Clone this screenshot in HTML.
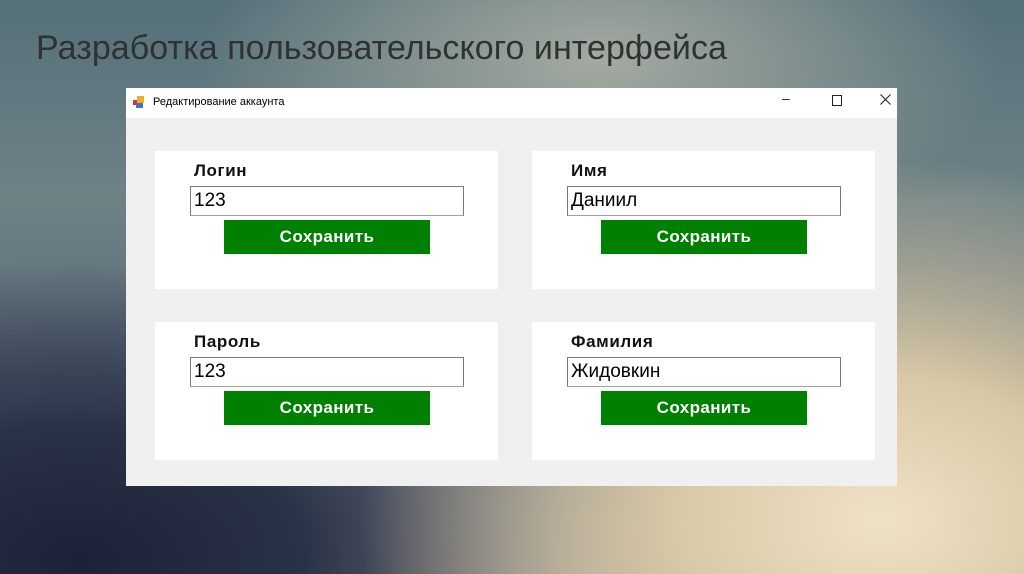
<!DOCTYPE html>
<html><head><meta charset="utf-8"><style>
*{margin:0;padding:0;box-sizing:border-box}
body{width:1024px;height:574px;overflow:hidden;position:relative;font-family:"Liberation Sans",sans-serif;
background:
radial-gradient(ellipse 520px 360px at 880px 520px,#f0e2c6 0%,#d9c8a6 40%,rgba(200,185,150,0) 100%),
radial-gradient(ellipse 500px 300px at 80px 560px,#1c2238 0%,#2a3248 45%,rgba(50,60,80,0) 100%),
radial-gradient(ellipse 400px 200px at 600px 60px,#a4aaa0 0%,rgba(150,160,155,0) 100%),
linear-gradient(180deg,#55707a 0%,#6e8286 35%,#5c6a78 65%,#8a8a8a 100%);}
h1{position:absolute;left:36px;top:29px;font-size:34px;font-weight:normal;color:#2e3232;letter-spacing:0.05px}
.win{position:absolute;left:126px;top:88px;width:771px;height:398px;background:#f0f0f0}
.tb{height:30px;background:#fff;position:relative;font-size:11px;color:#000}
.tb .ic{position:absolute;left:7px;top:8px;width:12px;height:12px}
.tb .t{position:absolute;left:27px;top:8px}
.ctl{position:absolute;top:4px;font-size:14px;color:#222}
.p{position:absolute;width:343px;height:138px;background:#fff}
.p .l{position:absolute;left:39px;top:10px;font-size:17px;font-weight:bold;color:#111;letter-spacing:0.6px}
.p .in{position:absolute;left:35px;top:35px;width:274px;height:30px;border:1px solid #7a7a7a;border-bottom-color:#a0a0a0;font-size:19px;padding:3px 0 0 3px;color:#000}
.p .b{position:absolute;left:69px;top:69px;width:206px;height:34px;background:#008000;color:#fff;font-size:17px;font-weight:bold;text-align:center;line-height:34px;letter-spacing:0.4px}
</style></head><body>
<h1>Разработка пользовательского интерфейса</h1>
<div class="win">
<div class="tb">
<svg class="ic" viewBox="0 0 12 12"><rect x="0" y="4" width="5" height="5" fill="#d33"/><rect x="4" y="0" width="7" height="7" fill="#f0b020"/><rect x="3" y="7" width="7" height="5" fill="#3a70d0"/></svg>
<span class="t">Редактирование аккаунта</span>
<span class="ctl" style="left:656px;top:2px">–</span>
<span style="position:absolute;left:706px;top:7px;width:10px;height:11px;border:1px solid #222"></span>
<svg style="position:absolute;left:754px;top:6px" width="11" height="11" viewBox="0 0 11 11"><path d="M0.5 0.5L10.5 10.5M10.5 0.5L0.5 10.5" stroke="#222" stroke-width="1.1"/></svg>
</div>
<div class="p" style="left:29px;top:63px"><div class="l">Логин</div><div class="in">123</div><div class="b">Сохранить</div></div>
<div class="p" style="left:406px;top:63px"><div class="l">Имя</div><div class="in">Даниил</div><div class="b">Сохранить</div></div>
<div class="p" style="left:29px;top:234px"><div class="l">Пароль</div><div class="in">123</div><div class="b">Сохранить</div></div>
<div class="p" style="left:406px;top:234px"><div class="l">Фамилия</div><div class="in">Жидовкин</div><div class="b">Сохранить</div></div>
</div>
</body></html>
